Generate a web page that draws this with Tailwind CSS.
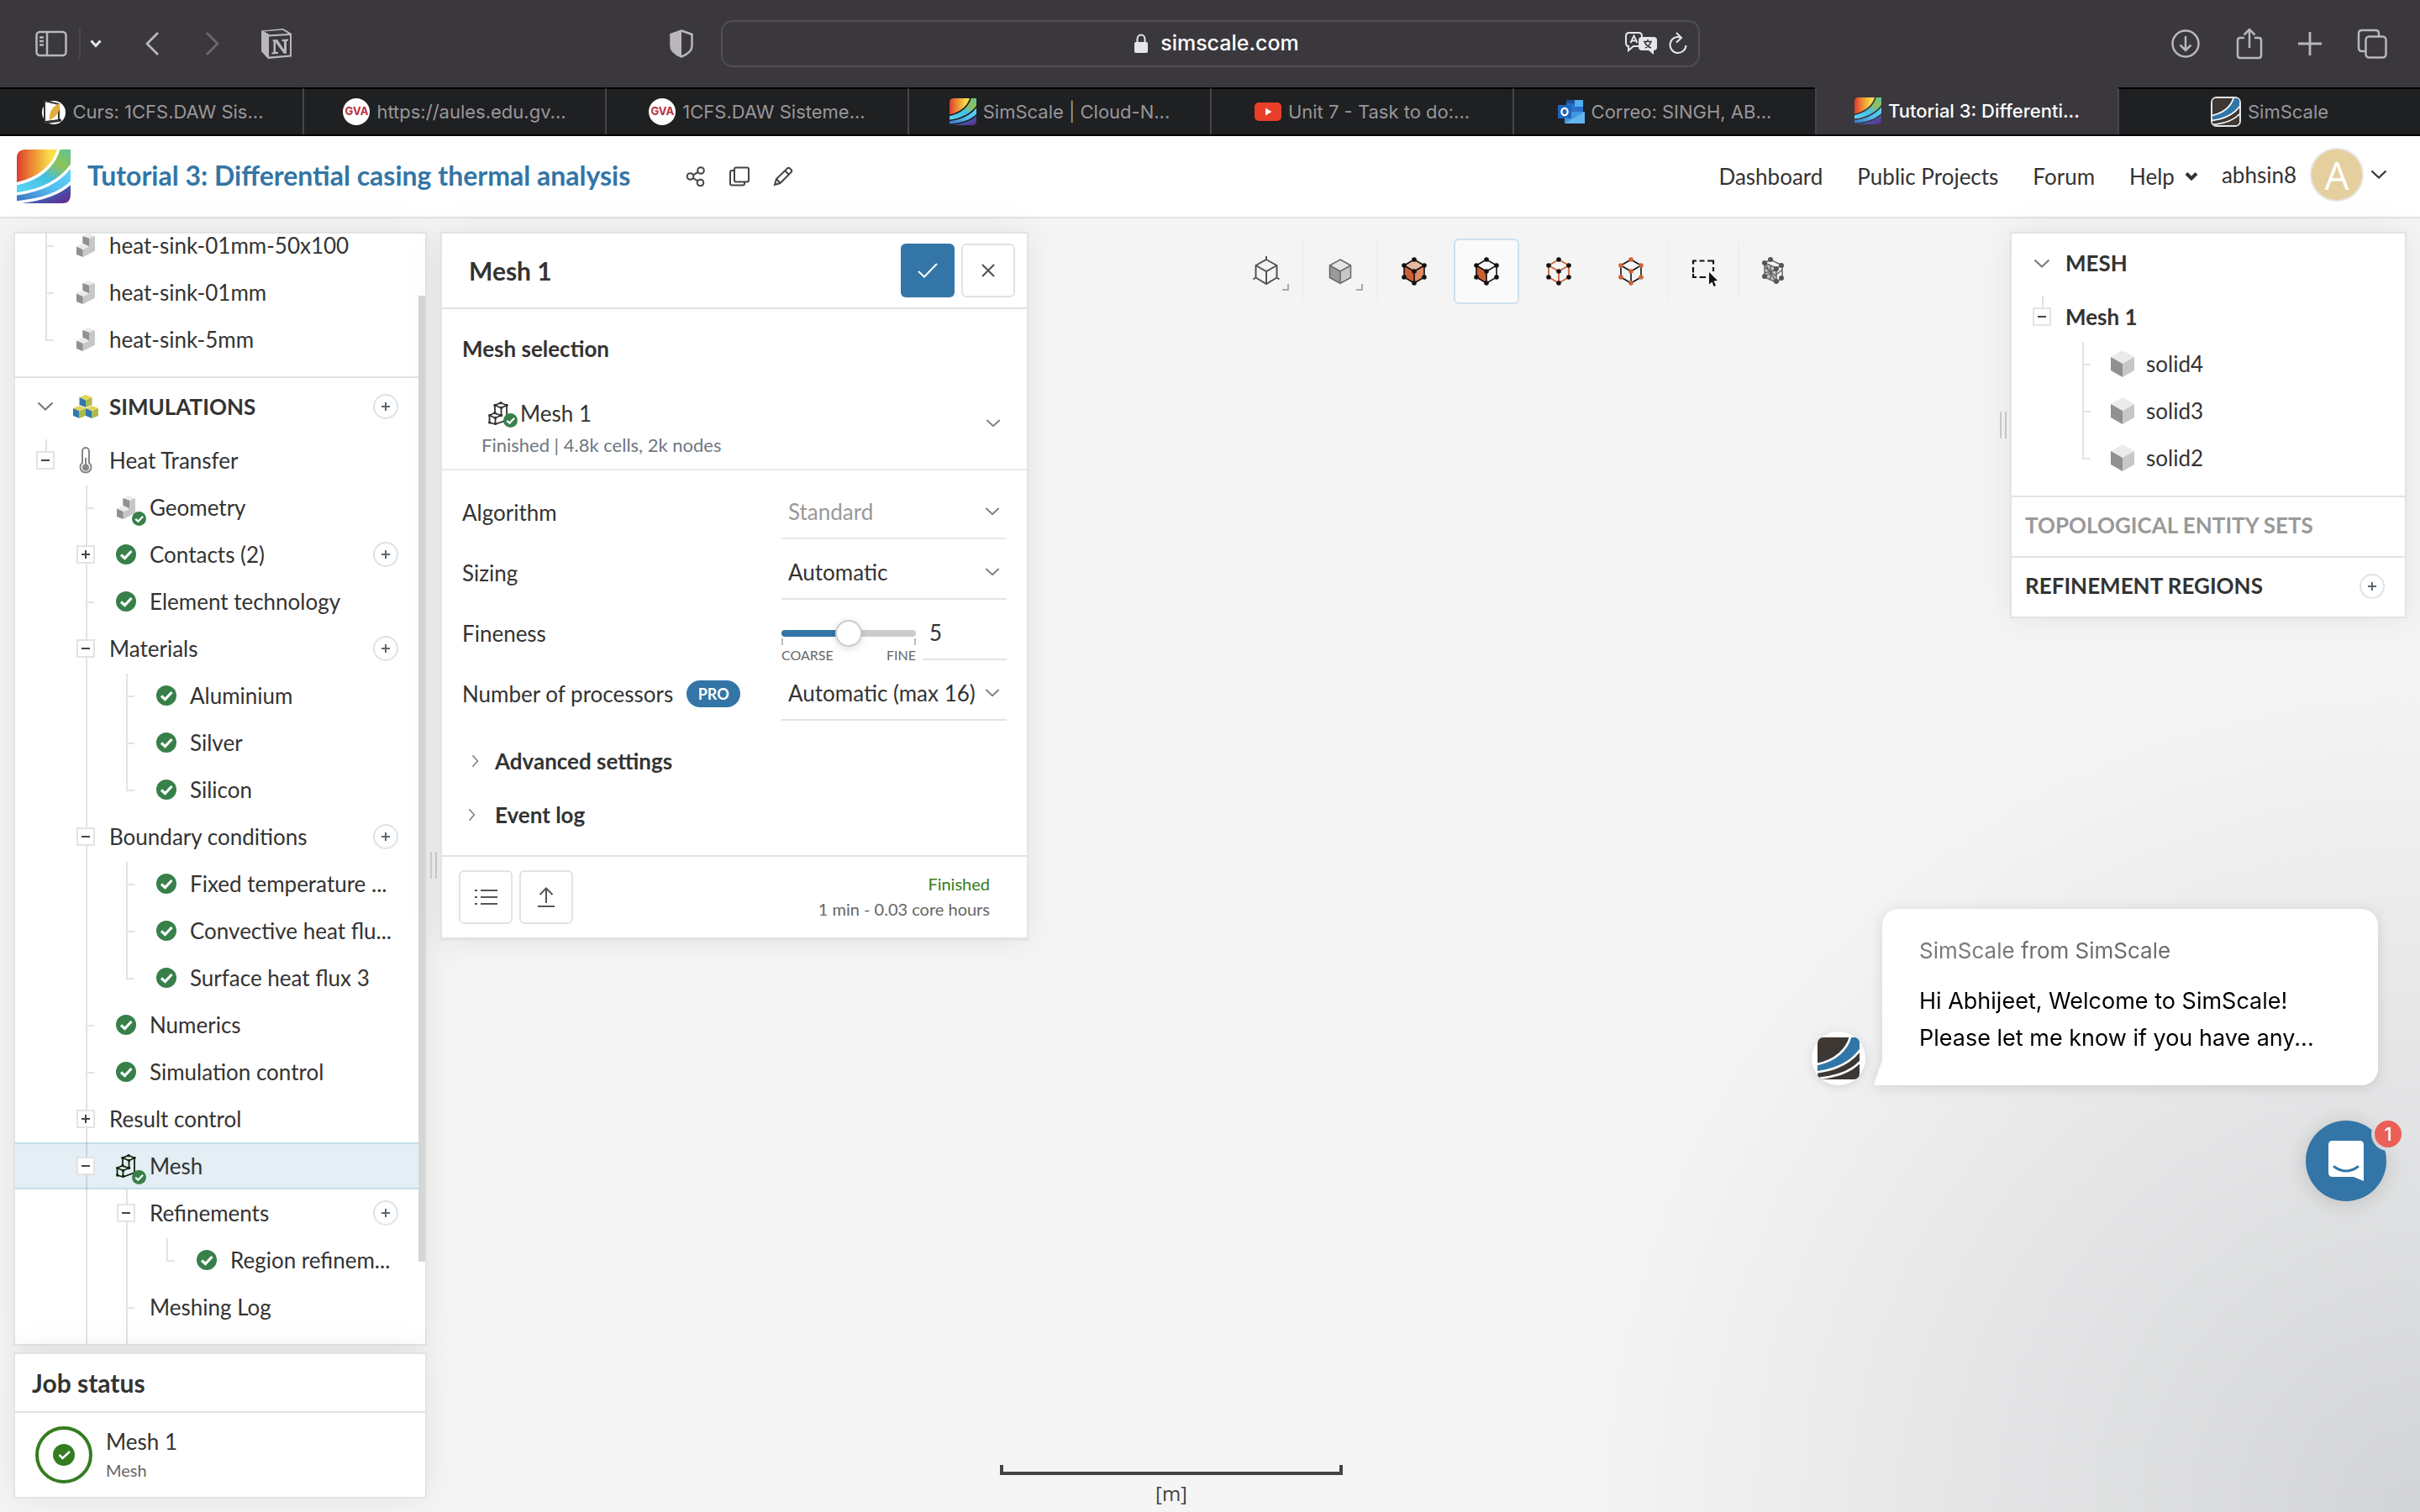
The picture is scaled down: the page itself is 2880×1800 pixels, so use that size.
<!DOCTYPE html>
<html lang="en">
<head>
<meta charset="utf-8">
<title>Tutorial 3: Differential casing thermal analysis</title>
<script src="https://cdn.jsdelivr.net/npm/@tailwindcss/browser@4"></script>
</head>
<body class="bg-[#f5f5f5] font-[Lato,sans-serif] text-[26px] text-[#333333]">

<svg class="absolute size-0" aria-hidden="true">
  <defs>
    <linearGradient id="lg-a" x1="0" y1="0.2" x2="0.8" y2="0.2"><stop offset="0" stop-color="#dc3b2f"/><stop offset="0.45" stop-color="#ec8a34"/><stop offset="1" stop-color="#f9e04b"/></linearGradient>
    <linearGradient id="lg-b" x1="1" y1="0" x2="0.2" y2="1"><stop offset="0" stop-color="#5cc49a"/><stop offset="0.3" stop-color="#8fc255"/><stop offset="0.6" stop-color="#45bfe0"/><stop offset="1" stop-color="#58d3f2"/></linearGradient>
    <linearGradient id="lg-c" x1="1" y1="0" x2="0" y2="1"><stop offset="0" stop-color="#5fd3f5"/><stop offset="0.5" stop-color="#52bdf0"/><stop offset="1" stop-color="#3a6fc0"/></linearGradient>
    <linearGradient id="lg-d" x1="0.2" y1="0.4" x2="1" y2="1"><stop offset="0" stop-color="#3777c4"/><stop offset="0.5" stop-color="#4554ac"/><stop offset="1" stop-color="#6a2487"/></linearGradient>
    <clipPath id="logo-clip"><path d="M10 0H64V54Q64 64 54 64H0V10Q0 0 10 0Z"/></clipPath>
    <clipPath id="logo-round"><rect width="64" height="64" rx="9"/></clipPath>
  </defs>
  <symbol id="logo" viewBox="0 0 64 64">
    <g clip-path="url(#logo-clip)">
      <path d="M0 0H50C45 18 28 35 0 41Z" fill="url(#lg-a)"/>
      <path d="M50 0H64V20C52 37 30 49 0 53V41C28 35 45 18 50 0Z" fill="url(#lg-b)"/>
      <path d="M64 20V40C52 52 32 60 0 63V53C30 49 52 37 64 20Z" fill="url(#lg-c)"/>
      <path d="M64 40V64H0V62C32 60 52 52 64 40Z" fill="url(#lg-d)"/>
      <path d="M50-1C45 18 28 35-1 41M65 19C52 37 30 49-1 53M65 39C52 52 32 60-1 63" fill="none" stroke="currentColor" stroke-width="3.4"/>
    </g>
  </symbol>
  <symbol id="logo-dark" viewBox="0 0 64 64">
    <g clip-path="url(#logo-round)">
      <path d="M0 0H64V64H0Z" fill="#3d3833"/>
      <path d="M50 0H64V20C52 37 30 49 0 53V41C28 35 45 18 50 0Z" fill="#3176a9"/>
      <path d="M50-1C45 18 28 35-1 41M65 19C52 37 30 49-1 53M65 37C52 51 32 60-1 63" fill="none" stroke="#fff" stroke-width="3.4"/>
    </g>
  </symbol>
  <symbol id="g-mid" viewBox="0 0 48 56"><path d="M25 0V56M25 29H34" stroke="#e3e3e3" stroke-width="2" fill="none"/></symbol>
  <symbol id="g-first" viewBox="0 0 48 56"><path d="M25 2V56M25 29H34" stroke="#e3e3e3" stroke-width="2" fill="none"/></symbol>
  <symbol id="g-last" viewBox="0 0 48 56"><path d="M25 0V29H34" stroke="#e3e3e3" stroke-width="2" fill="none"/></symbol>
  <symbol id="g-only" viewBox="0 0 48 56"><path d="M25 2V29H34" stroke="#e3e3e3" stroke-width="2" fill="none"/></symbol>
  <symbol id="g-line" viewBox="0 0 48 56"><path d="M25 0V56" stroke="#000" stroke-opacity=".11" stroke-width="2"/></symbol>
  <symbol id="g-minus" viewBox="0 0 48 56"><path d="M25 0V56" stroke="#000" stroke-opacity=".11" stroke-width="2"/><path d="M14 18H34V38H14Z" fill="#fff" stroke="#e3e3e3" stroke-width="2"/><path d="M19 28H29" stroke="#444" stroke-width="2"/></symbol>
  <symbol id="g-plus" viewBox="0 0 48 56"><path d="M25 0V56" stroke="#e3e3e3" stroke-width="2"/><path d="M14 18H34V38H14Z" fill="#fff" stroke="#e3e3e3" stroke-width="2"/><path d="M19 28H29M24 23V33" stroke="#444" stroke-width="2"/></symbol>
  <symbol id="g-root" viewBox="0 0 48 56"><path d="M25 3V18" stroke="#e3e3e3" stroke-width="2"/><path d="M14 18H34V38H14Z" fill="#fff" stroke="#e3e3e3" stroke-width="2"/><path d="M19 28H29" stroke="#444" stroke-width="2"/></symbol>
  <symbol id="chev-down" viewBox="0 0 20 12"><path d="M1.500 1.500L10 9.500L18.500 1.500" fill="none" stroke="currentColor" stroke-width="2.200"/></symbol>
  <symbol id="chev-right" viewBox="0 0 12 20"><path d="M1.500 1.500L9 10L1.500 18.500" fill="none" stroke="currentColor" stroke-width="2"/></symbol>
  <symbol id="plus-sm" viewBox="0 0 10 10"><path d="M0 5H10M5 0V10" stroke="#5b6670" stroke-width="2"/></symbol>
  <symbol id="ok" viewBox="0 0 24 24"><circle cx="12" cy="12" r="12" fill="#37804a"/><path d="M6 12.500L10.500 16.500L18.500 8" fill="none" stroke="#fff" stroke-width="3.200"/></symbol>
  <symbol id="part" viewBox="0 0 22 28">
    <path d="M14.300 0L22 2.900L15 5.700L7.300 2.900Z" fill="#ebebeb"/><path d="M7.300 2.900L15 5.700V15.400L7.300 11.800Z" fill="#90908e"/>
    <path d="M15 5.700L22 2.900V20.700L7.700 27.900V18.900L15 15.400Z" fill="#c7c7c8"/><path d="M0 15.400L7.300 11.800L15 15.400L7.700 18.900Z" fill="#ebebeb"/><path d="M0 15.400L7.700 18.900V27.900L0 25Z" fill="#90908e"/>
  </symbol>
  <symbol id="meshpart" viewBox="0 0 24 28">
    <g fill="none" stroke="currentColor" stroke-width="1.800"><path d="M15 1.500L22 4.500L15.500 7.500L8 4.500ZM8 4.500V14L15.500 16.500V7.500M22 4.500V22L8.500 27V19.500L15.500 16.500M1.500 16.500L8 13.500M1.500 16.500L8.500 19.500M1.500 16.500V25L8.500 27"/></g>
    <g fill="currentColor"><circle cx="15" cy="1.700" r="1.700"/><circle cx="22" cy="4.500" r="1.700"/><circle cx="15.500" cy="7.500" r="1.700"/><circle cx="8" cy="4.500" r="1.700"/><circle cx="15.500" cy="16.500" r="1.700"/><circle cx="8" cy="13.500" r="1.700"/><circle cx="1.800" cy="16.500" r="1.700"/><circle cx="8.500" cy="19.500" r="1.700"/><circle cx="1.800" cy="25" r="1.700"/><circle cx="8.500" cy="26.300" r="1.700"/></g>
  </symbol>
  <symbol id="cube" viewBox="0 0 28 32"><path d="M14 0L28 8L14 16L0 8Z" fill="#ebebeb"/><path d="M0 8L14 16V32L0 24Z" fill="#90908e"/><path d="M28 8L14 16V32L28 24Z" fill="#c7c7c8"/></symbol>
  <symbol id="cubes" viewBox="0 0 30 28">
    <path d="M15 0L22.500 3L15 6.500L7.500 3Z" fill="#e0d655"/><path d="M7.500 3L15 6.500V15L7.500 12Z" fill="#3377ab"/><path d="M22.500 3L15 6.500V15L22.500 12Z" fill="#a9bb4e"/>
    <path d="M7.500 13L15 16L7.500 19.500L0 16Z" fill="#e0d655"/><path d="M0 16L7.500 19.500V28L0 25Z" fill="#3377ab"/><path d="M15 16L7.500 19.500V28L15 25Z" fill="#a9bb4e"/>
    <path d="M22.500 13L30 16L22.500 19.500L15 16Z" fill="#e0d655"/><path d="M15 16L22.500 19.500V28L15 25Z" fill="#3377ab"/><path d="M30 16L22.500 19.500V28L30 25Z" fill="#a9bb4e"/>
  </symbol>
  <symbol id="corner" viewBox="0 0 8 8"><path d="M0 7H7V0" fill="none" stroke="#a9a9a9" stroke-width="2"/></symbol>
</svg>

<div class="flex min-h-screen flex-col">

  <!-- Browser toolbar -->
  <div class="grid h-[104px] grid-cols-[1fr_1165px_1fr] items-center bg-[#3a383d] text-[#b9b7bc]">
    <div class="flex items-center pl-[42px]">
      <button aria-label="Sidebar"><svg class="h-8 w-[38px]" viewBox="0 0 38 32" fill="none" stroke="currentColor" stroke-width="2.500"><rect x="1.500" y="2" width="35" height="28" rx="4"/><path d="M14 2V30M5 8.500H10M5 13H10M5 17.500H10"/></svg></button>
      <span class="ml-[14px] h-9 w-0.5 bg-[#4a484d]"></span>
      <button aria-label="Tab groups" class="ml-[11px]"><svg class="h-3 w-[14px] text-[#e6e6e8]" viewBox="0 0 14 12" fill="none" stroke="currentColor" stroke-width="3"><path d="M1.500 2.500L7 8.500L12.500 2.500"/></svg></button>
      <button aria-label="Back" class="ml-[52px]"><svg class="h-7 w-4" viewBox="0 0 16 28" fill="none" stroke="currentColor" stroke-width="2.800"><path d="M15 1L2 14L15 27"/></svg></button>
      <button aria-label="Forward" class="ml-14"><svg class="h-7 w-4 text-[#6a686d]" viewBox="0 0 16 28" fill="none" stroke="currentColor" stroke-width="2.800"><path d="M1 1L14 14L1 27"/></svg></button>
      <button aria-label="Notion" class="ml-[49px]"><svg class="h-[38px] w-[38px]" viewBox="0 0 38 38"><path d="M1 3.500L27 1L37 7V34.500L9 37L1 28Z" fill="currentColor"/><path d="M4 4.500L26.500 2.800L33 7L11 8.300Z" fill="#3a383d"/><path d="M10 10.500L35 9V32.500L10 34.500Z" fill="#3a383d"/><path d="M14 14.500L20 14L28 26V16.500L25.500 16V14L33 13.500V15.500L31 16V30.500L28 31L18 17.500V28.500L21 29V31L13.500 31.500V29.500L15.500 29V17Z" fill="currentColor"/></svg></button>
      <button aria-label="Privacy report" class="mr-[33px] ml-auto"><svg class="h-[34px] w-[28px]" viewBox="0 0 28 34"><path d="M14 1.500L26.500 6V20C26.500 26 20 30 14 32.500C8 30 1.500 26 1.500 20V6Z" fill="none" stroke="currentColor" stroke-width="2.500"/><path d="M14 1.500V32.500C8 30 1.500 26 1.500 20V6Z" fill="currentColor"/></svg></button>
    </div>
    <div class="flex h-14 items-center rounded-[14px] border-2 border-[#504e54] pr-3 pl-[102px] text-[#e6e6e8]">
      <div class="flex flex-1 items-center justify-center gap-[14px]">
        <svg class="h-6 w-[18px]" viewBox="0 0 18 24"><rect x="1" y="10" width="16" height="13" rx="2" fill="currentColor"/><path d="M4.500 11V6.500A4.500 5 0 0 1 13.500 6.500V11" fill="none" stroke="currentColor" stroke-width="2"/></svg>
        <span class="font-[Inter,sans-serif] text-[25px] font-medium text-white">simscale.com</span>
      </div>
      <button aria-label="Translate"><svg class="h-7 w-[38px]" viewBox="0 0 38 28"><path d="M20 8V5Q20 1 16 1H5Q1 1 1 5V13Q1 17 4 17V22L10 17H16" fill="none" stroke="currentColor" stroke-width="2"/><path d="M6.500 13L10.500 4.500L14.500 13M8 10.500H13" fill="none" stroke="currentColor" stroke-width="1.800"/><path d="M20 6H34Q38 6 38 10V18Q38 22 34 22V27L28 22H20Q16 22 16 18V10Q16 6 20 6Z" fill="currentColor"/><path d="M22 11.500H32M27 9V11.500M24 19C28 17 30 15 30.500 11.500M23.500 12C24.500 15.500 28 18 31 19" fill="none" stroke="#3a383d" stroke-width="1.700"/></svg></button>
      <button aria-label="Reload" class="ml-[13px]"><svg class="h-7 w-6" viewBox="0 0 24 28" fill="none" stroke="currentColor" stroke-width="2"><path d="M15 6.500A9.500 9.500 0 1 0 21.500 16M10 1L16 7L10 12.500"/></svg></button>
    </div>
    <div class="flex items-center justify-end gap-[42px] pr-[39px]">
      <button aria-label="Downloads"><svg class="h-9 w-9" viewBox="0 0 36 36" fill="none" stroke="currentColor" stroke-width="2.500"><circle cx="18" cy="18" r="15.500"/><path d="M18 9V26M11.500 19.500L18 26L24.500 19.500"/></svg></button>
      <button aria-label="Share"><svg class="h-10 w-8" viewBox="0 0 32 40" fill="none" stroke="currentColor" stroke-width="2.500"><path d="M10 13H5Q2 13 2 16V34Q2 37 5 37H27Q30 37 30 34V16Q30 13 27 13H22M16 25V3M9.500 9.500L16 3L22.500 9.500"/></svg></button>
      <button aria-label="New tab"><svg class="h-7 w-7" viewBox="0 0 28 28" fill="none" stroke="currentColor" stroke-width="2.800"><path d="M0 14H28M14 0V28"/></svg></button>
      <button aria-label="Tab overview"><svg class="h-9 w-9" viewBox="0 0 36 36" fill="none" stroke="currentColor" stroke-width="2.500"><rect x="10.500" y="9.500" width="24" height="25" rx="4"/><path d="M10.500 27H6Q2 27 2 23V6Q2 2 6 2H22Q26 2 26 6V9.500"/></svg></button>
    </div>
  </div>

  <!-- Browser tabs -->
  <nav class="grid h-[58px] grid-cols-8 border-b-2 border-black bg-[#1f2022] font-[Inter,sans-serif] text-[22px] text-[#98979a]">
    <a href="#" class="flex items-center justify-center gap-2 border-t-2 border-t-black"><svg class="h-8 w-8" viewBox="0 0 32 32"><circle cx="17" cy="17" r="14" fill="#fff"/><path d="M6 3L23 7V27L6 28Z" fill="#fff" stroke="#333" stroke-width="2"/><path d="M12 26C11 14 17 9 24 6C25 15 22 21 12 26Z" fill="#e3ad3d"/><path d="M6 29L26 26" stroke="#333" stroke-width="3"/></svg>Curs: 1CFS.DAW Sis...</a>
    <a href="#" class="flex items-center justify-center gap-2 border-t-2 border-l-2 border-t-black border-l-[#454547]"><span class="flex size-8 items-center justify-center rounded-full bg-white text-[13px] font-bold text-[#b8303f]">GVA</span>https://aules.edu.gv...</a>
    <a href="#" class="flex items-center justify-center gap-2 border-t-2 border-l-2 border-t-black border-l-[#454547]"><span class="flex size-8 items-center justify-center rounded-full bg-white text-[13px] font-bold text-[#b8303f]">GVA</span>1CFS.DAW Sisteme...</a>
    <a href="#" class="flex items-center justify-center gap-2 border-t-2 border-l-2 border-t-black border-l-[#454547]"><svg class="size-8 text-[#1f2022]"><use href="#logo"/></svg>SimScale | Cloud-N...</a>
    <a href="#" class="flex items-center justify-center gap-2 border-t-2 border-l-2 border-t-black border-l-[#454547]"><svg class="size-8" viewBox="0 0 32 32"><rect y="5" width="32" height="22" rx="5" fill="#e93e28"/><path d="M13 11.500L20.500 16L13 20.500Z" fill="#fff"/></svg>Unit 7 - Task to do:...</a>
    <a href="#" class="flex items-center justify-center gap-2 border-t-2 border-l-2 border-t-black border-l-[#454547]"><svg class="size-8" viewBox="0 0 32 32"><path d="M10 2H30V18H10Z" fill="#2b6fc6"/><path d="M20 2H30V10H20Z" fill="#4fb0ee"/><path d="M10 2H20V6H10Z" fill="#1d4f94"/><path d="M8 16H32V30H8Z" fill="#3f97df"/><path d="M32 16L8 30H32Z" fill="#62b6f0"/><rect y="8" width="16" height="16" fill="#1f66be"/><ellipse cx="8" cy="16" rx="3.600" ry="4.200" fill="none" stroke="#fff" stroke-width="2.200"/></svg>Correo: SINGH, AB...</a>
    <a href="#" aria-current="page" class="flex items-center justify-center gap-2 border-l-2 border-[#454547] bg-[#3a383d] font-medium text-white"><svg class="size-8 text-[#3a383d]"><use href="#logo"/></svg>Tutorial 3: Differenti...</a>
    <a href="#" class="flex items-center justify-center gap-2 border-t-2 border-l-2 border-t-black border-l-[#454547]"><span class="rounded-[7px] border-2 border-[#e4e4e4]"><svg class="size-8"><use href="#logo-dark"/></svg></span>SimScale</a>
  </nav>

  <!-- Project header -->
  <header class="flex h-[98px] items-center border-b-2 border-[#e3e3e3] bg-white pr-[39px] pl-5">
    <svg class="size-16 text-white"><use href="#logo"/></svg>
    <h1 class="ml-5 pb-0.5 text-[32px] font-bold text-[#3375a6]">Tutorial 3: Differential casing thermal analysis</h1>
    <div class="ml-[66px] flex items-center gap-7 text-[#444444]">
      <button aria-label="Share project"><svg class="size-6" viewBox="0 0 24 24" fill="none" stroke="currentColor" stroke-width="2"><circle cx="18" cy="5" r="3.800"/><circle cx="5.500" cy="12" r="3.800"/><circle cx="17.500" cy="19.500" r="3.800"/><path d="M9 10.300L14.700 6.800M8.800 13.800L14.200 17.500"/></svg></button>
      <button aria-label="Copy project"><svg class="size-6" viewBox="0 0 24 24" fill="none" stroke="currentColor" stroke-width="2"><rect x="6" y="1.500" width="17" height="17" rx="2"/><path d="M6 5H3Q1 5 1 7V20.500Q1 22.500 3 22.500H16Q18 22.500 18 20.500V18.500"/></svg></button>
      <button aria-label="Edit project"><svg class="size-6" viewBox="0 0 24 24" fill="none" stroke="currentColor" stroke-width="2"><path d="M2 22L4 15L17 2.500Q18.500 1 20 2.500L21.500 4Q23 5.500 21.500 7L8.500 20ZM14 5L19 10M4 15L8.500 20"/></svg></button>
    </div>
    <nav class="ml-auto flex items-center gap-[41px]">
      <a href="#">Dashboard</a>
      <a href="#">Public Projects</a>
      <a href="#">Forum</a>
      <a href="#" class="flex items-center gap-3">Help <svg class="h-3 w-4" viewBox="0 0 16 12" fill="none" stroke="currentColor" stroke-width="4"><path d="M2 2.500L8 8.500L14 2.500"/></svg></a>
    </nav>
    <button class="-mt-1 ml-7 flex items-center gap-2">
      <span>abhsin8</span>
      <span class="ml-2 flex size-16 items-center justify-center rounded-full border-2 border-[#e6e6e6] bg-[#e6cf9f] font-[Open_Sans,sans-serif] text-[46px] leading-none text-white">A</span>
      <svg class="h-3 w-5"><use href="#chev-down"/></svg>
    </button>
  </header>

  <main class="relative flex flex-1 items-stretch bg-[radial-gradient(ellipse_1018px_1018px_at_bottom_right,rgba(29,39,54,0.16),rgba(29,39,54,0))] px-4 py-4">

    <!-- Left column -->
    <aside class="flex w-[492px] flex-col gap-2">
      <section class="flex flex-1 overflow-hidden border-2 border-[#e3e3e3] bg-white shadow-[0_0_40px_rgba(0,0,0,0.08)]">
        <div class="flex flex-1 flex-col">
          <ul class="-mt-[14px] border-b-2 border-[#e3e3e3] pb-4">
            <li class="flex h-14 items-center pl-3"><svg class="h-14 w-12"><use href="#g-mid"/></svg><span class="flex w-12 justify-center"><svg class="h-7 w-[22px]"><use href="#part"/></svg></span><a href="#" class="pl-1">heat-sink-01mm-50x100</a></li>
            <li class="flex h-14 items-center pl-3"><svg class="h-14 w-12"><use href="#g-mid"/></svg><span class="flex w-12 justify-center"><svg class="h-7 w-[22px]"><use href="#part"/></svg></span><a href="#" class="pl-1">heat-sink-01mm</a></li>
            <li class="flex h-14 items-center pl-3"><svg class="h-14 w-12"><use href="#g-last"/></svg><span class="flex w-12 justify-center"><svg class="h-7 w-[22px]"><use href="#part"/></svg></span><a href="#" class="pl-1">heat-sink-5mm</a></li>
          </ul>
          <div class="flex h-[70px] items-center pr-6 pb-0.5 pl-3">
            <button aria-label="Collapse simulations" class="flex w-12 justify-center text-[#7a7a7a]"><svg class="h-3 w-5"><use href="#chev-down"/></svg></button>
            <span class="flex w-12 justify-center"><svg class="h-7 w-[30px]"><use href="#cubes"/></svg></span>
            <h2 class="flex-1 pl-1 font-bold">SIMULATIONS</h2>
            <button aria-label="Add simulation" class="flex size-[30px] items-center justify-center rounded-full border-2 border-[#dfe2e6]"><svg class="size-2.5"><use href="#plus-sm"/></svg></button>
          </div>
          <ul>
            <li class="flex h-14 items-center pl-3"><svg class="h-14 w-12"><use href="#g-root"/></svg><span class="flex w-12 justify-center"><svg class="h-8 w-4" viewBox="0 0 16 32" fill="none" stroke="#868686" stroke-width="2"><path d="M4 19V5A4 4 0 0 1 12 5V19A6.500 6.500 0 1 1 4 19Z"/><circle cx="8" cy="24.500" r="3" fill="#868686"/><path d="M8 13V24"/></svg></span><a href="#" class="pl-1">Heat Transfer</a></li>
            <li class="flex h-14 items-center pl-[60px]"><svg class="h-14 w-12"><use href="#g-first"/></svg><span class="relative flex w-12 justify-center"><svg class="h-7 w-[22px]"><use href="#part"/></svg><svg class="absolute top-[19px] left-[31px] size-[17px]"><use href="#ok"/></svg></span><a href="#" class="pl-1">Geometry</a></li>
            <li class="flex h-14 items-center pr-6 pl-[60px]"><svg class="h-14 w-12"><use href="#g-plus"/></svg><span class="flex w-12 justify-center"><svg class="size-6"><use href="#ok"/></svg></span><a href="#" class="flex-1 pl-1">Contacts (2)</a><button aria-label="Add contact" class="flex size-[30px] items-center justify-center rounded-full border-2 border-[#dfe2e6]"><svg class="size-2.5"><use href="#plus-sm"/></svg></button></li>
            <li class="flex h-14 items-center pl-[60px]"><svg class="h-14 w-12"><use href="#g-mid"/></svg><span class="flex w-12 justify-center"><svg class="size-6"><use href="#ok"/></svg></span><a href="#" class="pl-1">Element technology</a></li>
            <li class="flex h-14 items-center pr-6 pl-[60px]"><svg class="h-14 w-12"><use href="#g-minus"/></svg><a href="#" class="flex-1 pl-1">Materials</a><button aria-label="Add material" class="flex size-[30px] items-center justify-center rounded-full border-2 border-[#dfe2e6]"><svg class="size-2.5"><use href="#plus-sm"/></svg></button></li>
            <li class="flex h-14 items-center pl-[60px]"><svg class="h-14 w-12"><use href="#g-line"/></svg><svg class="h-14 w-12"><use href="#g-first"/></svg><span class="flex w-12 justify-center"><svg class="size-6"><use href="#ok"/></svg></span><a href="#" class="pl-1">Aluminium</a></li>
            <li class="flex h-14 items-center pl-[60px]"><svg class="h-14 w-12"><use href="#g-line"/></svg><svg class="h-14 w-12"><use href="#g-mid"/></svg><span class="flex w-12 justify-center"><svg class="size-6"><use href="#ok"/></svg></span><a href="#" class="pl-1">Silver</a></li>
            <li class="flex h-14 items-center pl-[60px]"><svg class="h-14 w-12"><use href="#g-line"/></svg><svg class="h-14 w-12"><use href="#g-last"/></svg><span class="flex w-12 justify-center"><svg class="size-6"><use href="#ok"/></svg></span><a href="#" class="pl-1">Silicon</a></li>
            <li class="flex h-14 items-center pr-6 pl-[60px]"><svg class="h-14 w-12"><use href="#g-minus"/></svg><a href="#" class="flex-1 pl-1">Boundary conditions</a><button aria-label="Add boundary condition" class="flex size-[30px] items-center justify-center rounded-full border-2 border-[#dfe2e6]"><svg class="size-2.5"><use href="#plus-sm"/></svg></button></li>
            <li class="flex h-14 items-center pl-[60px]"><svg class="h-14 w-12"><use href="#g-line"/></svg><svg class="h-14 w-12"><use href="#g-first"/></svg><span class="flex w-12 justify-center"><svg class="size-6"><use href="#ok"/></svg></span><a href="#" class="pl-1">Fixed temperature ...</a></li>
            <li class="flex h-14 items-center pl-[60px]"><svg class="h-14 w-12"><use href="#g-line"/></svg><svg class="h-14 w-12"><use href="#g-mid"/></svg><span class="flex w-12 justify-center"><svg class="size-6"><use href="#ok"/></svg></span><a href="#" class="pl-1">Convective heat flu...</a></li>
            <li class="flex h-14 items-center pl-[60px]"><svg class="h-14 w-12"><use href="#g-line"/></svg><svg class="h-14 w-12"><use href="#g-last"/></svg><span class="flex w-12 justify-center"><svg class="size-6"><use href="#ok"/></svg></span><a href="#" class="pl-1">Surface heat flux 3</a></li>
            <li class="flex h-14 items-center pl-[60px]"><svg class="h-14 w-12"><use href="#g-mid"/></svg><span class="flex w-12 justify-center"><svg class="size-6"><use href="#ok"/></svg></span><a href="#" class="pl-1">Numerics</a></li>
            <li class="flex h-14 items-center pl-[60px]"><svg class="h-14 w-12"><use href="#g-mid"/></svg><span class="flex w-12 justify-center"><svg class="size-6"><use href="#ok"/></svg></span><a href="#" class="pl-1">Simulation control</a></li>
            <li class="flex h-14 items-center pl-[60px]"><svg class="h-14 w-12"><use href="#g-plus"/></svg><a href="#" class="pl-1">Result control</a></li>
            <li class="flex h-14 items-center border-y-2 border-[#c5dfec] bg-[#e3eef5] pl-[60px]"><svg class="h-14 w-12"><use href="#g-minus"/></svg><span class="relative flex w-12 justify-center text-[#10270d]"><svg class="h-7 w-6"><use href="#meshpart"/></svg><svg class="absolute top-[19px] left-[31px] size-[17px]"><use href="#ok"/></svg></span><a href="#" class="pl-1">Mesh</a></li>
            <li class="flex h-14 items-center pr-6 pl-[60px]"><svg class="h-14 w-12"><use href="#g-line"/></svg><svg class="h-14 w-12"><use href="#g-minus"/></svg><a href="#" class="flex-1 pl-1">Refinements</a><button aria-label="Add refinement" class="flex size-[30px] items-center justify-center rounded-full border-2 border-[#dfe2e6]"><svg class="size-2.5"><use href="#plus-sm"/></svg></button></li>
            <li class="flex h-14 items-center pl-[60px]"><svg class="h-14 w-12"><use href="#g-line"/></svg><svg class="h-14 w-12"><use href="#g-line"/></svg><svg class="h-14 w-12"><use href="#g-only"/></svg><span class="flex w-12 justify-center"><svg class="size-6"><use href="#ok"/></svg></span><a href="#" class="pl-1">Region refinem...</a></li>
            <li class="flex h-14 items-center pl-[60px]"><svg class="h-14 w-12"><use href="#g-line"/></svg><svg class="h-14 w-12"><use href="#g-mid"/></svg><a href="#" class="pl-1">Meshing Log</a></li>
          </ul>
          <div class="flex h-4 flex-1 pl-[84px]"><span class="w-0.5 bg-[#e3e3e3]"></span><span class="ml-[46px] w-0.5 bg-[#e3e3e3]"></span></div>
        </div>
        <div class="w-2"><div class="mt-[74px] h-[1150px] bg-[#d6d6d6]"></div></div>
      </section>

      <section class="border-2 border-[#e3e3e3] bg-white shadow-[0_0_40px_rgba(0,0,0,0.08)]">
        <h2 class="flex h-[70px] items-center border-b-2 border-[#e3e3e3] px-5 text-[30px] font-bold">Job status</h2>
        <div class="flex h-[100px] items-center gap-4 px-6">
          <svg class="size-[68px]" viewBox="0 0 68 68"><circle cx="34" cy="34" r="32" fill="none" stroke="#347c20" stroke-width="4"/><circle cx="34" cy="34" r="13" fill="#347c20"/><path d="M28.500 34L32.500 38L41 30" fill="none" stroke="#fff" stroke-width="2.500"/></svg>
          <div><div class="leading-9">Mesh 1</div><div class="text-[20px] leading-8 text-[#666666]">Mesh</div></div>
        </div>
      </section>
    </aside>

    <div class="flex w-4 items-center justify-center gap-1"><span class="h-8 w-0.5 bg-[#cccccc]"></span><span class="h-8 w-0.5 bg-[#cccccc]"></span></div>

    <!-- Mesh settings -->
    <form class="w-[700px] self-start border-2 border-b-4 border-[#e3e3e3] bg-white shadow-[0_0_40px_rgba(0,0,0,0.08)]">
      <div class="flex h-[90px] items-center gap-2 border-b-2 border-[#e3e3e3] pr-[14px] pl-8">
        <h2 class="flex-1 text-[30px] font-bold">Mesh 1</h2>
        <button type="button" aria-label="Apply" class="flex size-16 items-center justify-center rounded-md bg-[#3375a6] text-white"><svg class="h-[18px] w-6" viewBox="0 0 24 18" fill="none" stroke="currentColor" stroke-width="2"><path d="M1 10L8 16.500L23 1"/></svg></button>
        <button type="button" aria-label="Close" class="flex size-16 items-center justify-center rounded-md border-2 border-[#e3e3e3] text-[#555555]"><svg class="size-4" viewBox="0 0 16 16" fill="none" stroke="currentColor" stroke-width="2.200"><path d="M1 1L15 15M15 1L1 15"/></svg></button>
      </div>
      <h3 class="mt-[31px] px-6 leading-8 font-bold">Mesh selection</h3>
      <button type="button" class="mt-[35px] flex h-[94px] w-full items-center justify-between border-b-2 border-[#e9e9ee] pr-[31px] pl-[47px] text-left">
        <span class="flex flex-col">
          <span class="flex items-center leading-10"><span class="relative ml-2 flex w-[38px] text-[#333333]"><svg class="h-7 w-6"><use href="#meshpart"/></svg><svg class="absolute top-3.5 left-[18px] size-[17px]"><use href="#ok"/></svg></span>Mesh 1</span>
          <span class="pb-1 text-[22px] leading-9 text-[#6e7781]">Finished | 4.8k cells, 2k nodes</span>
        </span>
        <svg class="mb-4 h-3 w-[18px] text-[#808080]"><use href="#chev-down"/></svg>
      </button>
      <div class="flex flex-col px-6 pt-2.5">
        <div class="flex h-[72px] items-end">
          <label for="algo" class="flex h-16 flex-1 items-center">Algorithm</label>
          <div class="relative w-[268px]"><select id="algo" disabled class="h-16 w-full appearance-none border-b-2 border-[#e9e9e9] pl-2 text-[#999999] opacity-100"><option>Standard</option></select><svg class="pointer-events-none absolute top-[25px] right-2 h-3 w-[18px] text-[#808080]"><use href="#chev-down"/></svg></div>
        </div>
        <div class="flex h-[72px] items-end">
          <label for="sizing" class="flex h-16 flex-1 items-center">Sizing</label>
          <div class="relative w-[268px]"><select id="sizing" class="h-16 w-full appearance-none border-b-2 border-[#e3e3e3] pl-2"><option>Automatic</option></select><svg class="pointer-events-none absolute top-[25px] right-2 h-3 w-[18px] text-[#808080]"><use href="#chev-down"/></svg></div>
        </div>
        <div class="flex h-[72px] items-end">
          <label for="fine" class="flex h-16 flex-1 items-center">Fineness</label>
          <div class="flex h-16 w-[268px] items-start">
            <div class="flex w-40 flex-col pt-4">
              <input id="fine" type="range" min="0" max="10" value="5" class="block h-8 w-40 appearance-none bg-transparent [&::-webkit-slider-runnable-track]:h-2 [&::-webkit-slider-runnable-track]:rounded-sm [&::-webkit-slider-runnable-track]:bg-[linear-gradient(to_right,#3375a6_50%,#cccccc_50%)] [&::-webkit-slider-thumb]:-mt-3 [&::-webkit-slider-thumb]:size-8 [&::-webkit-slider-thumb]:appearance-none [&::-webkit-slider-thumb]:rounded-full [&::-webkit-slider-thumb]:border-2 [&::-webkit-slider-thumb]:border-solid [&::-webkit-slider-thumb]:border-[#cccccc] [&::-webkit-slider-thumb]:bg-white [&::-webkit-slider-thumb]:shadow-[0_2px_8px_rgba(0,0,0,0.15)]">
              <div class="-mt-2.5 flex h-2 justify-between"><span class="w-0.5 bg-[#bbbbbb]"></span><span class="w-0.5 bg-[#bbbbbb]"></span></div>
              <div class="flex justify-between pt-0.5 text-[16px] leading-5 text-[#666666]"><span>COARSE</span><span>FINE</span></div>
            </div>
            <input aria-label="Fineness value" value="5" class="ml-2 h-16 w-[100px] border-b-2 border-[#e3e3e3] pl-2">
          </div>
        </div>
        <div class="flex h-[72px] items-end">
          <label for="procs" class="flex h-16 flex-1 items-center gap-4">Number of processors <span class="flex h-8 w-16 items-center justify-center rounded-full bg-[#3375a6] text-[18px] font-bold text-white">PRO</span></label>
          <div class="relative w-[268px]"><select id="procs" class="h-16 w-full appearance-none border-b-2 border-[#e3e3e3] pl-2"><option>Automatic (max 16)</option></select><svg class="pointer-events-none absolute top-[25px] right-2 h-3 w-[18px] text-[#808080]"><use href="#chev-down"/></svg></div>
        </div>
        <button type="button" class="mt-4 flex h-16 items-center gap-[18px] pl-[11px] font-bold"><svg class="h-4 w-2.5 text-[#808080]"><use href="#chev-right"/></svg><span>Advanced settings</span></button>
        <button type="button" class="flex h-16 items-center gap-[22px] pl-[7px] font-bold"><svg class="h-4 w-2.5 text-[#808080]"><use href="#chev-right"/></svg><span>Event log</span></button>
      </div>
      <div class="mt-4 flex h-[98px] items-center gap-2 border-t-2 border-[#e3e3e3] pr-11 pl-5">
        <button type="button" aria-label="Show log" class="flex size-16 items-center justify-center rounded-md border-2 border-[#e3e3e3] text-[#555555]"><svg class="h-5 w-7" viewBox="0 0 28 20" fill="none" stroke="currentColor" stroke-width="2"><path d="M8 2H28M8 10H28M8 18H28M1 2H4M1 10H4M1 18H4"/></svg></button>
        <button type="button" aria-label="Export" class="flex size-16 items-center justify-center rounded-md border-2 border-[#e3e3e3] text-[#555555]"><svg class="h-6 w-5" viewBox="0 0 20 24" fill="none" stroke="currentColor" stroke-width="2"><path d="M10 19V1.500M2.500 9L10 1.500L17.500 9M0 23H20"/></svg></button>
        <div class="flex-1 pb-0.5 text-right text-[20px] leading-[30px] text-[#666666]"><div class="text-[#347c20]">Finished</div><div>1 min - 0.03 core hours</div></div>
      </div>
    </form>

    <!-- Viewer toolbar -->
    <div class="flex flex-1 items-start justify-center pl-3">
      <div class="mt-px flex h-[92px] items-center rounded-md bg-[#f4f4f4] px-2">
        <button aria-label="View" class="relative flex size-[78px] items-center justify-center"><svg class="size-12" viewBox="-24 -24 48 48" fill="none" stroke="#555" stroke-width="2"><path d="M0-14L12.500-7V7.500L0 15L-12.500 7.500V-7ZM-12.500-7L0 0L12.500-7M0 0V15M0-14V-18M12.500 7.500L15.500 9.500M-12.500 7.500L-15.500 9.500"/></svg><svg class="absolute right-3 bottom-4 size-2"><use href="#corner"/></svg></button>
        <span class="mx-1 h-[70px] w-0.5 bg-[#efefef]"></span>
        <button aria-label="Render mode" class="relative flex size-[78px] items-center justify-center"><svg class="size-12" viewBox="-24 -24 48 48"><path d="M0-14L12.500-7L0 0L-12.500-7Z" fill="#e6e6e6"/><path d="M-12.500-7L0 0V14L-12.500 7.500Z" fill="#9a9a9a"/><path d="M12.500-7L0 0V14L12.500 7.500Z" fill="#c6c7c8"/><path d="M0-14L12.500-7V7.500L0 14.500L-12.500 7.500V-7ZM-12.500-7L0 0L12.500-7M0 0V14" fill="none" stroke="#666" stroke-width="1.500"/></svg><svg class="absolute right-3 bottom-4 size-2"><use href="#corner"/></svg></button>
        <span class="mx-1 h-[70px] w-0.5 bg-[#efefef]"></span>
        <div class="flex gap-2">
          <button aria-label="Select volumes" class="flex size-[78px] items-center justify-center"><svg class="size-12" viewBox="-24 -24 48 48"><path d="M0-14L12-7L0 0L-12-7Z" fill="#e9b8a0"/><path d="M-12-7L0 0V14L-12 7Z" fill="#cc5f34"/><path d="M12-7L0 0V14L12 7Z" fill="#de8a62"/><path d="M0-14L12-7V7L0 14L-12 7V-7ZM-12-7L0 0L12-7M0 0V14" fill="none" stroke="#111" stroke-width="1.600"/><g fill="#111"><circle cy="-14" r="2.800"/><circle cx="12" cy="-7" r="2.800"/><circle cx="12" cy="7" r="2.800"/><circle cy="14" r="2.800"/><circle cx="-12" cy="7" r="2.800"/><circle cx="-12" cy="-7" r="2.800"/><circle r="2.800"/></g></svg></button>
          <button aria-label="Select faces" aria-pressed="true" class="flex size-[78px] items-center justify-center rounded-md border-2 border-[#cde0ec] bg-[#fafafa]"><svg class="size-12" viewBox="-24 -24 48 48"><path d="M-12-7L0 0V14L-12 7Z" fill="#cc5f34"/><path d="M0-14L12-7V7L0 14L-12 7V-7ZM-12-7L0 0L12-7M0 0V14" fill="none" stroke="#111" stroke-width="1.600"/><g fill="#111"><circle cy="-14" r="2.800"/><circle cx="12" cy="-7" r="2.800"/><circle cx="12" cy="7" r="2.800"/><circle cy="14" r="2.800"/><circle cx="-12" cy="7" r="2.800"/><circle cx="-12" cy="-7" r="2.800"/><circle r="2.800"/></g></svg></button>
          <button aria-label="Select edges" class="flex size-[78px] items-center justify-center"><svg class="size-12" viewBox="-24 -24 48 48"><path d="M0-14L12-7V7L0 14L-12 7V-7ZM-12-7L0 0L12-7M0 0V14" fill="none" stroke="#cf6237" stroke-width="1.800"/><g fill="#111"><circle cy="-14" r="2.800"/><circle cx="12" cy="-7" r="2.800"/><circle cx="12" cy="7" r="2.800"/><circle cy="14" r="2.800"/><circle cx="-12" cy="7" r="2.800"/><circle cx="-12" cy="-7" r="2.800"/><circle r="2.800"/></g></svg></button>
          <button aria-label="Select nodes" class="flex size-[78px] items-center justify-center"><svg class="size-12" viewBox="-24 -24 48 48"><path d="M0-14L12-7V7L0 14L-12 7V-7ZM-12-7L0 0L12-7M0 0V14" fill="none" stroke="#111" stroke-width="1.600"/><g fill="#cf6237"><circle cy="-14" r="2.800"/><circle cx="12" cy="-7" r="2.800"/><circle cx="12" cy="7" r="2.800"/><circle cy="14" r="2.800"/><circle cx="-12" cy="7" r="2.800"/><circle cx="-12" cy="-7" r="2.800"/><circle r="2.800"/></g></svg></button>
        </div>
        <span class="mx-1 h-[70px] w-0.5 bg-[#efefef]"></span>
        <button aria-label="Box selection" class="flex h-[78px] w-[74px] items-center justify-center"><svg class="size-12" viewBox="-24 -24 48 48"><path d="M-12-8.500V-12.500H-8M-4.500-12.500H1.500M5-12.500H12V-8.500M-12-5V1.500M12-5V0M-12 3V7H-8M-4.500 7H3" fill="none" stroke="#111" stroke-width="2.200"/><path d="M7 1L17 11L12.500 11.500L15 17L12.500 18L10.500 12.500L7 15.500Z" fill="#111"/></svg></button>
        <span class="mx-1 h-[70px] w-0.5 bg-[#efefef]"></span>
        <button aria-label="Mesh clip" class="flex h-[78px] w-[74px] items-center justify-center"><svg class="size-12" viewBox="-24 -24 48 48"><path d="M-11-10L3-4V13L-11 7Z" fill="#c9c9c9"/><path d="M-11-10L-4-14L10-7L3-4ZM-11-10V7L3 13V-4M10-7V8L3 13M-11-5L3 6M-11 2L3-2M-4-7V10M-11 7L3-4M-11-10L3 13M10-2L3 4" fill="none" stroke="#666" stroke-width="1.500"/><g fill="#555"><circle cx="-4" cy="-14" r="3"/><circle cx="-11" cy="-10" r="3"/><circle cx="9" cy="-7" r="3"/><circle cx="3" cy="-3" r="3"/><circle cx="-11" cy="6" r="3"/><circle cx="9" cy="8" r="3"/><circle cx="3" cy="12" r="3"/></g></svg></button>
      </div>
    </div>

    <!-- Mesh entities -->
    <aside class="flex items-center self-start">
      <div class="mr-1 flex gap-1"><span class="h-8 w-0.5 bg-[#cccccc]"></span><span class="h-8 w-0.5 bg-[#cccccc]"></span></div>
      <section class="w-[472px] border-2 border-[#e3e3e3] bg-white shadow-[0_0_40px_rgba(0,0,0,0.08)]">
        <div class="flex h-[71px] items-center pl-3"><button aria-label="Collapse mesh" class="flex w-12 justify-center text-[#7a7a7a]"><svg class="h-3 w-5"><use href="#chev-down"/></svg></button><h2 class="pl-1 font-bold">MESH</h2></div>
        <ul class="border-b-2 border-[#e3e3e3] pb-[17px]">
          <li class="flex h-14 items-center pl-3"><svg class="h-14 w-12"><use href="#g-root"/></svg><a href="#" class="pl-1 font-bold">Mesh 1</a></li>
          <li class="flex h-14 items-center pl-[60px]"><svg class="h-14 w-12"><use href="#g-first"/></svg><span class="flex w-12 justify-center"><svg class="h-8 w-7"><use href="#cube"/></svg></span><a href="#" class="pl-1">solid4</a></li>
          <li class="flex h-14 items-center pl-[60px]"><svg class="h-14 w-12"><use href="#g-mid"/></svg><span class="flex w-12 justify-center"><svg class="h-8 w-7"><use href="#cube"/></svg></span><a href="#" class="pl-1">solid3</a></li>
          <li class="flex h-14 items-center pl-[60px]"><svg class="h-14 w-12"><use href="#g-last"/></svg><span class="flex w-12 justify-center"><svg class="h-8 w-7"><use href="#cube"/></svg></span><a href="#" class="pl-1">solid2</a></li>
        </ul>
        <h2 class="flex h-[72px] items-center border-b-2 border-[#e3e3e3] px-4 pb-[3px] font-bold text-[#999999]">TOPOLOGICAL ENTITY SETS</h2>
        <div class="flex h-[70px] items-center justify-between pr-6 pb-[3px] pl-4"><h2 class="font-bold">REFINEMENT REGIONS</h2><button aria-label="Add refinement region" class="flex size-[30px] items-center justify-center rounded-full border-2 border-[#dfe2e6]"><svg class="size-2.5"><use href="#plus-sm"/></svg></button></div>
      </section>
    </aside>

    <!-- Scale of the 3D view -->
    <div class="absolute bottom-0 left-[1190px] flex w-[408px] flex-col items-center">
      <div class="h-3 w-full border-x-4 border-b-4 border-[#444444]"></div>
      <div class="mt-1 pb-1 font-[Open_Sans,sans-serif] text-[24px] leading-9 text-[#444444]">[m]</div>
    </div>

    <!-- Support chat -->
    <div class="absolute right-[50px] bottom-[508px] flex items-end gap-2.5">
      <span class="flex size-16 items-center justify-center rounded-full bg-white shadow-[0_2px_12px_rgba(0,0,0,0.12)]"><svg class="size-[50px]"><use href="#logo-dark"/></svg></span>
      <div class="flex items-end drop-shadow-[0_2px_8px_rgba(0,0,0,0.12)]">
        <svg class="h-[30px] w-2.5" viewBox="0 0 10 30"><path d="M0 30L10 0V30Z" fill="#fff"/></svg>
        <div class="h-[210px] w-[590px] rounded-[20px] rounded-bl-none bg-white px-11 pt-8 font-[Inter,sans-serif]">
          <p class="text-[26px] leading-9 text-[#7a7a7a]">SimScale <span class="text-[#6c6c6c]">from SimScale</span></p>
          <p class="mt-5 text-[27px] leading-[44px] text-black">Hi Abhijeet, Welcome to SimScale!<br>Please let me know if you have any...</p>
        </div>
      </div>
    </div>
    <button aria-label="Open chat" class="absolute right-10 bottom-[370px] size-24">
      <svg class="size-24 overflow-visible drop-shadow-[0_2px_12px_rgba(0,0,0,0.15)]" viewBox="0 0 96 96"><mask id="cut"><rect x="-10" y="-10" width="130" height="130" fill="#fff"/><circle cx="98" cy="16" r="20" fill="#000"/></mask><circle cx="48" cy="48" r="48" fill="#3375a6" mask="url(#cut)"/><path d="M32 24H64Q69 24 69 29V72L57 67H32Q27 67 27 62V29Q27 24 32 24Z" fill="#fff"/><path d="M34 55Q48 65 62 55" fill="none" stroke="#3375a6" stroke-width="3" stroke-linecap="round"/></svg>
      <span class="absolute top-0 -right-[18px] flex size-8 items-center justify-center rounded-full bg-[#eb5f56] font-[Inter,sans-serif] text-[22px] font-medium text-white">1</span>
    </button>
  </main>
</div>
</body>
</html>
